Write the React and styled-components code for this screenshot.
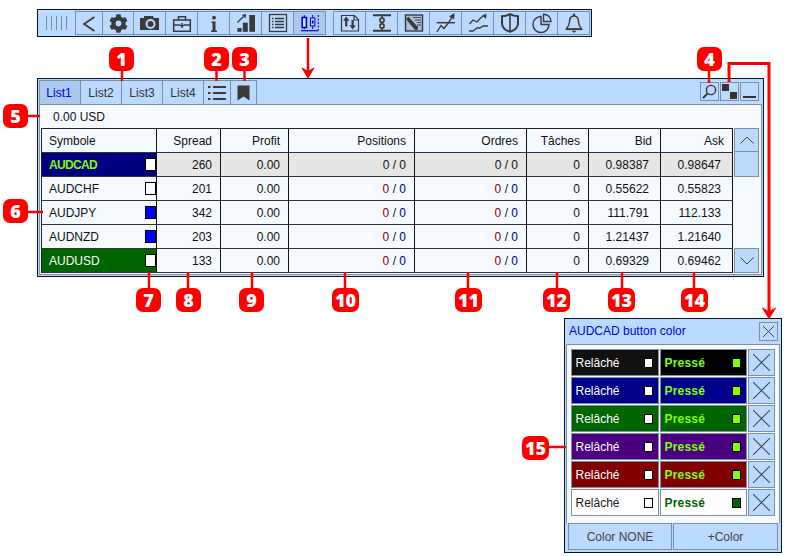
import React from 'react';
import styled, { createGlobalStyle } from 'styled-components';
import { FaCog } from 'react-icons/fa';

const BLUE = '#bbdaff';
const PALE = '#f5faff';
const LINE = '#7f8fa3';
const DARK = '#00142c';
const INK = '#3a3a3a';
const RED = '#ff0000';

const Global = createGlobalStyle`
  html, body { margin: 0; padding: 0; background: #fff; }
  body { font-family: "Liberation Sans", Arial, sans-serif; font-size: 12px; color: #111; }
`;

const Page = styled.div`
  position: relative;
  width: 788px;
  height: 556px;
  padding-top: 9px;
  box-sizing: border-box;
  overflow: hidden;
  background: #fff;
`;

/* toolbar */
const Toolbar = styled.div`
  display: flex;
  box-sizing: border-box;
  width: 555px;
  height: 28px;
  margin-left: 37px;
  padding: 1px;
  border: 1px solid ${DARK};
  background: ${BLUE};
`;

const Grip = styled.div`
  display: flex;
  gap: 4px;
  align-items: center;
  box-sizing: border-box;
  width: 37px;
  padding-left: 7px;
  & > i { display: block; width: 1px; height: 14px; background: #7c8da3; }
`;

const ToolGroup = styled.div`
  display: flex;
  height: 24px;
  margin-left: ${p => p.$gap || 0}px;
  border-left: 1px solid ${LINE};
`;

const ToolButton = styled.div`
  display: flex;
  align-items: center;
  justify-content: center;
  box-sizing: border-box;
  width: ${p => p.$w || 32}px;
  height: 24px;
  border: 1px solid ${LINE};
  border-left: 0;
  background: ${p => (p.$active ? '#a9c9ee' : 'transparent')};
  color: ${p => (p.$active ? '#0000c8' : INK)};
  & > svg { flex: none; }
`;

/* main panel */
const Panel = styled.div`
  box-sizing: border-box;
  width: 727px;
  height: 199px;
  margin: 41px 0 0 37px;
  padding: 1px;
  border: 1px solid ${DARK};
  background: ${BLUE};
`;

const TabBar = styled.div`
  display: flex;
  height: 24px;
`;

const Tab = styled.div`
  display: flex;
  align-items: center;
  justify-content: center;
  box-sizing: border-box;
  width: ${p => p.$w || 41}px;
  padding-right: ${p => (p.$first ? 2 : 0)}px;
  border: 1px solid ${LINE};
  border-left: ${p => (p.$first ? `1px solid ${LINE}` : '0')};
  border-bottom: 0;
  background: ${p => (p.$active ? '#a9c9ee' : 'transparent')};
  color: ${p => (p.$active ? '#0000e0' : '#333')};
`;

const TabActions = styled.div`
  display: flex;
  gap: 1px;
  margin: 2px 3px 0 auto;
`;

const SmallButton = styled.div`
  display: flex;
  align-items: center;
  justify-content: center;
  box-sizing: border-box;
  width: 19px;
  height: 19px;
  border: 1px solid ${LINE};
  background: ${BLUE};
`;

const PanelBody = styled.div`
  box-sizing: border-box;
  height: 171px;
  padding: 0 1px;
  border: 1px solid ${LINE};
  background: ${PALE};
`;

const Balance = styled.div`
  display: flex;
  align-items: center;
  height: 23px;
  padding-left: 12px;
`;

const TableWrap = styled.div`
  display: flex;
  gap: 1px;
`;

const Table = styled.div`
  box-sizing: border-box;
  width: 692px;
  border-top: 1px solid #222;
  border-left: 1px solid #222;
`;

const Row = styled.div`
  display: grid;
  grid-template-columns: 115px 64px 68px 126px 112px 62px 72px 72px;
  height: 24px;
  background: ${p => (p.$selected ? '#e6e6e6' : 'transparent')};
`;

const Cell = styled.div`
  display: flex;
  align-items: center;
  justify-content: flex-end;
  box-sizing: border-box;
  padding-right: ${p => p.$inset || 8}px;
  border-right: 1px solid #111;
  border-bottom: 1px solid #333;
`;

const SymbolCell = styled(Cell)`
  justify-content: space-between;
  padding: 0 0 0 7px;
  background: ${p => p.$bg || 'transparent'};
  color: ${p => p.$fg || '#111'};
  font-weight: ${p => (p.$bold ? 700 : 400)};
  letter-spacing: ${p => (p.$bold ? '-0.65px' : '0')};
`;

const Swatch = styled.span`
  display: block;
  box-sizing: border-box;
  flex: none;
  width: ${p => p.$w || 11}px;
  height: ${p => p.$h || 13}px;
  border: 1px solid #000;
  background: ${p => p.$color};
`;

const Red = styled.span`color: #8b0000;`;
const Navy = styled.span`color: #00008b;`;

const Scrollbar = styled.div`
  display: flex;
  flex-direction: column;
  width: 25px;
  height: 145px;
`;

const ScrollPart = styled.div`
  display: flex;
  align-items: center;
  justify-content: center;
  box-sizing: border-box;
  height: ${p => p.$h}px;
  margin-top: ${p => (p.$push ? 'auto' : '0')};
  border: 1px solid ${LINE};
  border-top: ${p => (p.$flat ? '0' : `1px solid ${LINE}`)};
  background: ${BLUE};
`;

/* colour dialog */
const Dialog = styled.div`
  box-sizing: border-box;
  width: 218px;
  height: 235px;
  margin: 41px 0 0 564px;
  padding: 1px;
  border: 1px solid ${DARK};
  background: ${BLUE};
`;

const DialogTitle = styled.div`
  display: flex;
  align-items: center;
  justify-content: space-between;
  box-sizing: border-box;
  height: 24px;
  padding: 0 2px 2px 3px;
  color: #0000e0;
`;

const DialogBody = styled.div`
  display: flex;
  flex-direction: column;
  gap: 1px;
  box-sizing: border-box;
  height: 179px;
  padding: 4px 4px 0;
  border: 1px solid ${LINE};
  border-bottom: 0;
  background: ${PALE};
`;

const ColorRow = styled.div`
  display: grid;
  grid-template-columns: 88px 87px 27px;
  gap: 1px;
  height: 27px;
`;

const ColorCell = styled.div`
  display: flex;
  align-items: center;
  justify-content: space-between;
  box-sizing: border-box;
  padding: 0 5px 0 3.5px;
  border: 1px solid ${LINE};
  background: ${p => p.$bg};
  color: ${p => p.$fg};
  font-weight: ${p => (p.$bold ? 700 : 400)};
  letter-spacing: ${p => (p.$bold ? '0.2px' : '0')};
`;

const ClearButton = styled.div`
  display: flex;
  align-items: center;
  justify-content: center;
  box-sizing: border-box;
  border: 1px solid ${LINE};
  background: ${BLUE};
`;

const DialogFooter = styled.div`
  display: grid;
  grid-template-columns: 104px 105px;
  gap: 1px;
  height: 27px;
  padding: 0 2px;
  background: ${BLUE};
`;

const FooterButton = styled.div`
  display: flex;
  align-items: center;
  justify-content: center;
  border: 1px solid ${LINE};
  color: #444;
`;

/* red annotations lying over the screenshot */
const Marks = styled.svg`
  position: absolute;
  left: 0;
  top: 0;
  pointer-events: none;
`;

const Badge = styled.div`
  position: absolute;
  left: ${p => p.$x}px;
  top: ${p => p.$y}px;
  display: flex;
  align-items: center;
  justify-content: center;
  width: ${p => p.$w || 25}px;
  height: 24px;
  border-radius: 7px;
  background: ${RED};
  color: #fff;
  font-family: "Open Sans", "DejaVu Sans", sans-serif;
  font-size: 18px;
  font-weight: 800;
`;

const Icon = ({ children, size = 24 }) => (
  <svg width={size} height={size} viewBox="0 0 24 24" fill="none" stroke="currentColor">
    {children}
  </svg>
);

const toolIcons = [
  { w: 27, icon: <Icon><path d="M17.5 6L7 13l10.5 7" strokeWidth="1.8" /></Icon> },
  { w: 31, icon: <FaCog size={19} /> },
  {
    icon: (
      <Icon>
        <path d="M2 7h4V5h9l1 2h5v12H2z" fill="currentColor" stroke="none" />
        <circle cx="12.5" cy="13" r="5" fill={BLUE} stroke="none" />
        <circle cx="12.5" cy="13" r="3" fill="currentColor" stroke="none" />
      </Icon>
    ),
  },
  {
    icon: (
      <Icon>
        <g strokeWidth="1.5">
          <rect x="3.7" y="9" width="16.6" height="11.3" />
          <path d="M8.5 9V5.7h7V9M3.7 14H10M14 14h6.3M12 12v5M10 14.5h4" />
        </g>
      </Icon>
    ),
  },
  {
    icon: (
      <Icon>
        <circle cx="12" cy="6.7" r="1.9" fill="currentColor" stroke="none" />
        <path d="M9.5 10.5h4v9H15V21H9v-1.5h1.5V12h-1z" fill="currentColor" stroke="none" />
      </Icon>
    ),
  },
  {
    icon: (
      <Icon>
        <g fill="currentColor" stroke="none">
          <rect x="3.4" y="17" width="4.2" height="3.8" />
          <rect x="8.8" y="11.7" width="5" height="9.1" />
          <rect x="15.3" y="4" width="5.7" height="16.8" />
          <path d="M12 2.800L11.500 7.500 8 4z" />
        </g>
        <path d="M3.400 11.500L9.500 5.500" strokeWidth="1.300" />
      </Icon>
    ),
  },
  {
    icon: (
      <Icon>
        <rect x="3.5" y="3.5" width="17" height="17" strokeWidth="1.3" />
        <path d="M6 7.5h1.5M9 7.5h9M6 10.5h1.5M9 10.5h9M6 13.5h1.5M9 13.5h9M6 16.5h1.5M9 16.5h9" strokeWidth="1.3" />
      </Icon>
    ),
  },
  {
    active: true,
    icon: (
      <Icon>
        <path d="M6.300 4v14M14.700 4v14" strokeWidth="1" />
        <rect x="4.200" y="6.500" width="4.200" height="10" fill="#d6e6ff" strokeWidth="1.600" />
        <rect x="12.500" y="7" width="4.400" height="8" fill={BLUE} strokeWidth="1" />
        <rect x="13.800" y="9.500" width="1.800" height="3" fill="currentColor" stroke="none" />
        <path d="M3 19.700h17.500" strokeWidth="1.200" />
        <path d="M20.300 4v15" strokeWidth="1" strokeDasharray="2 1.5" />
      </Icon>
    ),
  },
];

const sideIcons = [
  <Icon key="a">
    <path d="M3.5 4.5h13l4 4v11.5h-17zM16 4.5v4.5h4.5" strokeWidth="1.2" />
    <path d="M8.2 5.5l3.3 4.2H9.4v5.8H7.1V9.7H5zM14.7 18.5l-3.3-4.2h2.1V9h2.3v5.3h2.1z" fill="currentColor" stroke="none" />
  </Icon>,
  <Icon key="b">
    <path d="M3 4.3h18M3 19.7h18" strokeWidth="2" />
    <path d="M12 4v16" strokeWidth="1.4" />
    <circle cx="12" cy="9.2" r="2.1" fill={BLUE} strokeWidth="1.6" />
    <circle cx="12" cy="15" r="2.1" fill={BLUE} strokeWidth="1.6" />
  </Icon>,
  <Icon key="c">
    <rect x="3.5" y="4" width="17" height="16" fill="#a7c0dc" strokeWidth="1.4" />
    <path d="M11 6.5h8M13 9h6M15 11.5h4M15 14h4" strokeWidth="0.9" />
    <path d="M6.5 5.8l9.6 10.4-.6 2.9-2.9-.7L3.9 8z" fill="currentColor" stroke="none" />
  </Icon>,
  <Icon key="d">
    <path d="M2.7 11.7H21" strokeWidth="1.5" />
    <path d="M3 21l4-6.5 3 3 5-6.5 3-5" strokeWidth="1.4" />
    <path d="M20.5 2l-.3 6.4-5.2-3z" fill="currentColor" stroke="none" />
  </Icon>,
  <Icon key="e">
    <path d="M3.5 13L7 9l4 2 3.5-4 3-2" strokeWidth="1.3" />
    <path d="M20.5 2.7l-.5 5.2-3.9-3.3z" fill="currentColor" stroke="none" />
    <path d="M3 20h4l4-3h3l3-2h5" strokeWidth="1.3" />
  </Icon>,
  <Icon key="f">
    <path d="M12 3.2c2.5 1.4 5 2 8 2v7c0 4.5-3.6 7.2-8 8.6-4.400-1.400-8-4.100-8-8.600v-7c3 0 5.500-.600 8-2z" strokeWidth="2" />
    <path d="M12 4v16" strokeWidth="1.6" />
  </Icon>,
  <Icon key="g">
    <path d="M11 5.500a8 8 0 1 0 8 8h-8z" strokeWidth="1.400" />
    <path d="M13.500 3.200v7.300H21a7.500 7.500 0 0 0-7.500-7.300z" strokeWidth="1.400" />
  </Icon>,
  <Icon key="h">
    <circle cx="12" cy="3.800" r="1.200" fill="currentColor" stroke="none" />
    <path d="M12 5c-4 0-4.500 3-4.500 6s-1.500 5-3 7h15c-1.500-2-3-4-3-7s-.500-6-4.500-6z" strokeWidth="1.400" />
    <path d="M4 18.300h16" strokeWidth="1.600" />
    <path d="M10 20h4l-2 1.500z" fill="currentColor" stroke="currentColor" strokeWidth="0.500" />
  </Icon>,
];

const CloseMark = ({ size }) => (
  <svg width={size} height={size} viewBox="0 0 10 10" stroke="#444" strokeWidth={10 / size} fill="none">
    <path d="M0 0l10 10M10 0L0 10" />
  </svg>
);

const ChevronMark = ({ down }) => (
  <svg width="14" height="8" viewBox="0 0 14 8" stroke="#444" fill="none">
    <path d={down ? 'M0.500 0.500L7 7l6.500-6.500' : 'M0.500 7.500L7 1l6.500 6.500'} />
  </svg>
);

const columns = ['Spread', 'Profit', 'Positions', 'Ordres', 'Tâches', 'Bid', 'Ask'];

const rows = [
  { name: 'AUDCAD', spread: 260, bid: '0.98387', ask: '0.98647', bg: '#000080', fg: '#7fff00', bold: true, swatch: '#fff', selected: true },
  { name: 'AUDCHF', spread: 201, bid: '0.55622', ask: '0.55823', swatch: '#fff' },
  { name: 'AUDJPY', spread: 342, bid: '111.791', ask: '112.133', swatch: '#0000ff' },
  { name: 'AUDNZD', spread: 203, bid: '1.21437', ask: '1.21640', swatch: '#0000ff' },
  { name: 'AUDUSD', spread: 133, bid: '0.69329', ask: '0.69462', bg: '#006400', fg: '#fff', swatch: '#fff' },
];

const colorRows = [
  { off: '#111111', on: '#000000' },
  { off: '#00008b', on: '#00008b' },
  { off: '#006400', on: '#006400' },
  { off: '#4b0082', on: '#4b0082' },
  { off: '#800000', on: '#800000' },
  { off: '#ffffff', on: '#ffffff', light: true },
];

const badges = [
  { n: 1, x: 109, y: 47 },
  { n: 2, x: 204, y: 47 },
  { n: 3, x: 232, y: 47 },
  { n: 4, x: 697, y: 47 },
  { n: 5, x: 3, y: 104 },
  { n: 6, x: 3, y: 199 },
  { n: 7, x: 136, y: 288 },
  { n: 8, x: 176, y: 288 },
  { n: 9, x: 239, y: 288 },
  { n: 10, x: 332, y: 288, w: 27 },
  { n: 11, x: 455, y: 288, w: 27 },
  { n: 12, x: 543, y: 288, w: 27 },
  { n: 13, x: 608, y: 288, w: 27 },
  { n: 14, x: 681, y: 288, w: 27 },
  { n: 15, x: 522, y: 436, w: 27 },
];

const leaders = [
  'M122 70V81', 'M216.500 70V81', 'M244.500 70V81', 'M709 70V83',
  'M27 116H40', 'M27 212H43',
  'M149 272V290', 'M188 272V290', 'M252 272V290', 'M345 272V290',
  'M468 272V290', 'M557 272V290', 'M622 272V290', 'M694 272V290',
  'M547 447H566',
];

const PairCount = ({ plain }) => (
  plain ? '0 / 0' : <span><Red>0</Red> / <Navy>0</Navy></span>
);

export default function App() {
  return (
    <Page>
      <Global />
      <Toolbar>
        <Grip><i /><i /><i /><i /><i /></Grip>
        <ToolGroup>
          {toolIcons.map((t, i) => (
            <ToolButton key={i} $w={t.w} $active={t.active}>{t.icon}</ToolButton>
          ))}
        </ToolGroup>
        <ToolGroup $gap={7}>
          {sideIcons.map((icon, i) => (
            <ToolButton key={i}>{icon}</ToolButton>
          ))}
        </ToolGroup>
      </Toolbar>

      <Panel>
        <TabBar>
          <Tab $first $active $w={42}>List1</Tab>
          <Tab>List2</Tab>
          <Tab>List3</Tab>
          <Tab>List4</Tab>
          <Tab $w={27}>
            <svg width="18" height="16" viewBox="0 0 18 16" fill={INK}>
              <rect x="0" y="1" width="2.500" height="2" />
              <rect x="5" y="1" width="13" height="2" />
              <rect x="0" y="7" width="2.500" height="2" />
              <rect x="5" y="7" width="13" height="2" />
              <rect x="0" y="13" width="2.500" height="2" />
              <rect x="5" y="13" width="13" height="2" />
            </svg>
          </Tab>
          <Tab $w={26}>
            <svg width="13" height="16" viewBox="0 0 13 16" fill={INK}>
              <path d="M0.500 0.500h12V15.500L6.500 11.500 0.500 15.500z" />
            </svg>
          </Tab>
          <TabActions>
            <SmallButton>
              <svg width="15" height="15" viewBox="0 0 15 15" fill="none" stroke="#333">
                <circle cx="9" cy="6" r="4.600" strokeWidth="1.400" />
                <path d="M5.500 9.500L1 14" strokeWidth="1.800" />
              </svg>
            </SmallButton>
            <SmallButton>
              <svg width="17" height="17" viewBox="0 0 17 17" fill="#333">
                <rect x="1" y="1" width="7" height="7" />
                <rect x="9" y="9" width="7" height="7" />
              </svg>
            </SmallButton>
            <SmallButton>
              <svg width="17" height="17" viewBox="0 0 17 17" fill="#333">
                <rect x="2" y="13" width="13" height="2" />
              </svg>
            </SmallButton>
          </TabActions>
        </TabBar>
        <PanelBody>
          <Balance>0.00 USD</Balance>
          <TableWrap>
            <Table>
              <Row>
                <SymbolCell>Symbole</SymbolCell>
                {columns.map(c => <Cell key={c}>{c}</Cell>)}
              </Row>
              {rows.map(r => (
                <Row key={r.name} $selected={r.selected}>
                  <SymbolCell $bg={r.bg} $fg={r.fg} $bold={r.bold}>
                    {r.name}
                    <Swatch $color={r.swatch} />
                  </SymbolCell>
                  <Cell>{r.spread}</Cell>
                  <Cell>0.00</Cell>
                  <Cell><PairCount plain={r.selected} /></Cell>
                  <Cell><PairCount plain={r.selected} /></Cell>
                  <Cell>0</Cell>
                  <Cell $inset={11}>{r.bid}</Cell>
                  <Cell $inset={11}>{r.ask}</Cell>
                </Row>
              ))}
            </Table>
            <Scrollbar>
              <ScrollPart $h={24}><ChevronMark /></ScrollPart>
              <ScrollPart $h={25} $flat />
              <ScrollPart $h={25} $push><ChevronMark down /></ScrollPart>
            </Scrollbar>
          </TableWrap>
        </PanelBody>
      </Panel>

      <Dialog>
        <DialogTitle>
          AUDCAD button color
          <SmallButton><CloseMark size={11} /></SmallButton>
        </DialogTitle>
        <DialogBody>
          {colorRows.map(c => (
            <ColorRow key={c.off}>
              <ColorCell $bg={c.off} $fg={c.light ? '#222' : '#fff'}>
                Relâché
                <Swatch $color="#fff" $w={9} $h={10} />
              </ColorCell>
              <ColorCell $bg={c.on} $fg={c.light ? '#006400' : '#7fff00'} $bold>
                Pressé
                <Swatch $color={c.light ? '#006400' : '#7fff00'} $w={9} $h={10} />
              </ColorCell>
              <ClearButton><CloseMark size={17} /></ClearButton>
            </ColorRow>
          ))}
        </DialogBody>
        <DialogFooter>
          <FooterButton>Color NONE</FooterButton>
          <FooterButton>+Color</FooterButton>
        </DialogFooter>
      </Dialog>

      <Marks width="788" height="556" viewBox="0 0 788 556" fill="none" stroke={RED} strokeWidth="2.500">
        {leaders.map(d => <path key={d} d={d} />)}
        <path d="M308 38V74" />
        <path d="M302 68L308 78l6-10-6 3.500z" fill={RED} strokeWidth="1" />
        <path d="M729 82V63.500H769V314" strokeWidth="3" />
        <path d="M762.500 308L769 318.500l6.500-10.500-6.500 4z" fill={RED} strokeWidth="1" />
      </Marks>
      {badges.map(b => (
        <Badge key={b.n} $x={b.x} $y={b.y} $w={b.w}>{b.n}</Badge>
      ))}
    </Page>
  );
}
